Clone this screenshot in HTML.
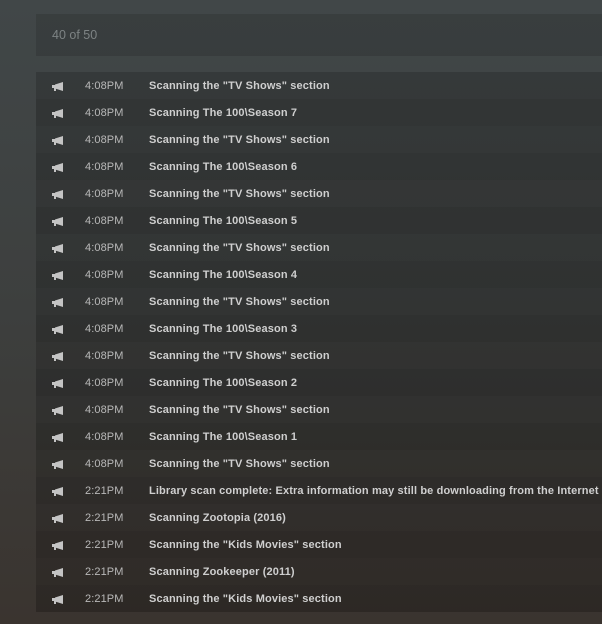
<!DOCTYPE html>
<html><head><style>
html,body{margin:0;padding:0}
body{width:602px;height:624px;overflow:hidden;background:linear-gradient(#414748 0%,#3d3f3e 50%,#3a342f 100%);font-family:"Liberation Sans",sans-serif;position:relative}
.hdr{position:absolute;left:36px;top:14px;width:566px;height:42px;background:rgba(0,0,0,0.12);color:#7d8384;font-size:12.5px;line-height:42px;text-indent:16px}
.list{position:absolute;left:36px;top:72px;width:566px}
.row{height:27px;line-height:27px;font-size:11px;color:#cfcfcf;position:relative;background:rgba(0,0,0,0.17)}
.row:nth-child(even){background:rgba(0,0,0,0.22)}
.ic{position:absolute;left:16px;top:10px}
.t{position:absolute;left:49px;top:1px;color:#b9b9b9;letter-spacing:0.1px}
.m{position:absolute;left:113px;top:1px;font-weight:bold;white-space:nowrap;letter-spacing:0.13px}
</style></head><body>
<div class="hdr">40 of 50</div>
<div class="list">
<div class="row"><svg class="ic" width="12" height="9" viewBox="0 0 12 9"><path d="M0 3h3v3H0z M3 2.5L11 0v9L3 6.5z M2 6h2v3H2z" fill="#c4c4c4"/></svg><span class="t">4:08PM</span><span class="m">Scanning the "TV Shows" section</span></div>
<div class="row"><svg class="ic" width="12" height="9" viewBox="0 0 12 9"><path d="M0 3h3v3H0z M3 2.5L11 0v9L3 6.5z M2 6h2v3H2z" fill="#c4c4c4"/></svg><span class="t">4:08PM</span><span class="m">Scanning The 100\Season 7</span></div>
<div class="row"><svg class="ic" width="12" height="9" viewBox="0 0 12 9"><path d="M0 3h3v3H0z M3 2.5L11 0v9L3 6.5z M2 6h2v3H2z" fill="#c4c4c4"/></svg><span class="t">4:08PM</span><span class="m">Scanning the "TV Shows" section</span></div>
<div class="row"><svg class="ic" width="12" height="9" viewBox="0 0 12 9"><path d="M0 3h3v3H0z M3 2.5L11 0v9L3 6.5z M2 6h2v3H2z" fill="#c4c4c4"/></svg><span class="t">4:08PM</span><span class="m">Scanning The 100\Season 6</span></div>
<div class="row"><svg class="ic" width="12" height="9" viewBox="0 0 12 9"><path d="M0 3h3v3H0z M3 2.5L11 0v9L3 6.5z M2 6h2v3H2z" fill="#c4c4c4"/></svg><span class="t">4:08PM</span><span class="m">Scanning the "TV Shows" section</span></div>
<div class="row"><svg class="ic" width="12" height="9" viewBox="0 0 12 9"><path d="M0 3h3v3H0z M3 2.5L11 0v9L3 6.5z M2 6h2v3H2z" fill="#c4c4c4"/></svg><span class="t">4:08PM</span><span class="m">Scanning The 100\Season 5</span></div>
<div class="row"><svg class="ic" width="12" height="9" viewBox="0 0 12 9"><path d="M0 3h3v3H0z M3 2.5L11 0v9L3 6.5z M2 6h2v3H2z" fill="#c4c4c4"/></svg><span class="t">4:08PM</span><span class="m">Scanning the "TV Shows" section</span></div>
<div class="row"><svg class="ic" width="12" height="9" viewBox="0 0 12 9"><path d="M0 3h3v3H0z M3 2.5L11 0v9L3 6.5z M2 6h2v3H2z" fill="#c4c4c4"/></svg><span class="t">4:08PM</span><span class="m">Scanning The 100\Season 4</span></div>
<div class="row"><svg class="ic" width="12" height="9" viewBox="0 0 12 9"><path d="M0 3h3v3H0z M3 2.5L11 0v9L3 6.5z M2 6h2v3H2z" fill="#c4c4c4"/></svg><span class="t">4:08PM</span><span class="m">Scanning the "TV Shows" section</span></div>
<div class="row"><svg class="ic" width="12" height="9" viewBox="0 0 12 9"><path d="M0 3h3v3H0z M3 2.5L11 0v9L3 6.5z M2 6h2v3H2z" fill="#c4c4c4"/></svg><span class="t">4:08PM</span><span class="m">Scanning The 100\Season 3</span></div>
<div class="row"><svg class="ic" width="12" height="9" viewBox="0 0 12 9"><path d="M0 3h3v3H0z M3 2.5L11 0v9L3 6.5z M2 6h2v3H2z" fill="#c4c4c4"/></svg><span class="t">4:08PM</span><span class="m">Scanning the "TV Shows" section</span></div>
<div class="row"><svg class="ic" width="12" height="9" viewBox="0 0 12 9"><path d="M0 3h3v3H0z M3 2.5L11 0v9L3 6.5z M2 6h2v3H2z" fill="#c4c4c4"/></svg><span class="t">4:08PM</span><span class="m">Scanning The 100\Season 2</span></div>
<div class="row"><svg class="ic" width="12" height="9" viewBox="0 0 12 9"><path d="M0 3h3v3H0z M3 2.5L11 0v9L3 6.5z M2 6h2v3H2z" fill="#c4c4c4"/></svg><span class="t">4:08PM</span><span class="m">Scanning the "TV Shows" section</span></div>
<div class="row"><svg class="ic" width="12" height="9" viewBox="0 0 12 9"><path d="M0 3h3v3H0z M3 2.5L11 0v9L3 6.5z M2 6h2v3H2z" fill="#c4c4c4"/></svg><span class="t">4:08PM</span><span class="m">Scanning The 100\Season 1</span></div>
<div class="row"><svg class="ic" width="12" height="9" viewBox="0 0 12 9"><path d="M0 3h3v3H0z M3 2.5L11 0v9L3 6.5z M2 6h2v3H2z" fill="#c4c4c4"/></svg><span class="t">4:08PM</span><span class="m">Scanning the "TV Shows" section</span></div>
<div class="row"><svg class="ic" width="12" height="9" viewBox="0 0 12 9"><path d="M0 3h3v3H0z M3 2.5L11 0v9L3 6.5z M2 6h2v3H2z" fill="#c4c4c4"/></svg><span class="t">2:21PM</span><span class="m">Library scan complete: Extra information may still be downloading from the Internet</span></div>
<div class="row"><svg class="ic" width="12" height="9" viewBox="0 0 12 9"><path d="M0 3h3v3H0z M3 2.5L11 0v9L3 6.5z M2 6h2v3H2z" fill="#c4c4c4"/></svg><span class="t">2:21PM</span><span class="m">Scanning Zootopia (2016)</span></div>
<div class="row"><svg class="ic" width="12" height="9" viewBox="0 0 12 9"><path d="M0 3h3v3H0z M3 2.5L11 0v9L3 6.5z M2 6h2v3H2z" fill="#c4c4c4"/></svg><span class="t">2:21PM</span><span class="m">Scanning the "Kids Movies" section</span></div>
<div class="row"><svg class="ic" width="12" height="9" viewBox="0 0 12 9"><path d="M0 3h3v3H0z M3 2.5L11 0v9L3 6.5z M2 6h2v3H2z" fill="#c4c4c4"/></svg><span class="t">2:21PM</span><span class="m">Scanning Zookeeper (2011)</span></div>
<div class="row"><svg class="ic" width="12" height="9" viewBox="0 0 12 9"><path d="M0 3h3v3H0z M3 2.5L11 0v9L3 6.5z M2 6h2v3H2z" fill="#c4c4c4"/></svg><span class="t">2:21PM</span><span class="m">Scanning the "Kids Movies" section</span></div>
</div>
</body></html>
